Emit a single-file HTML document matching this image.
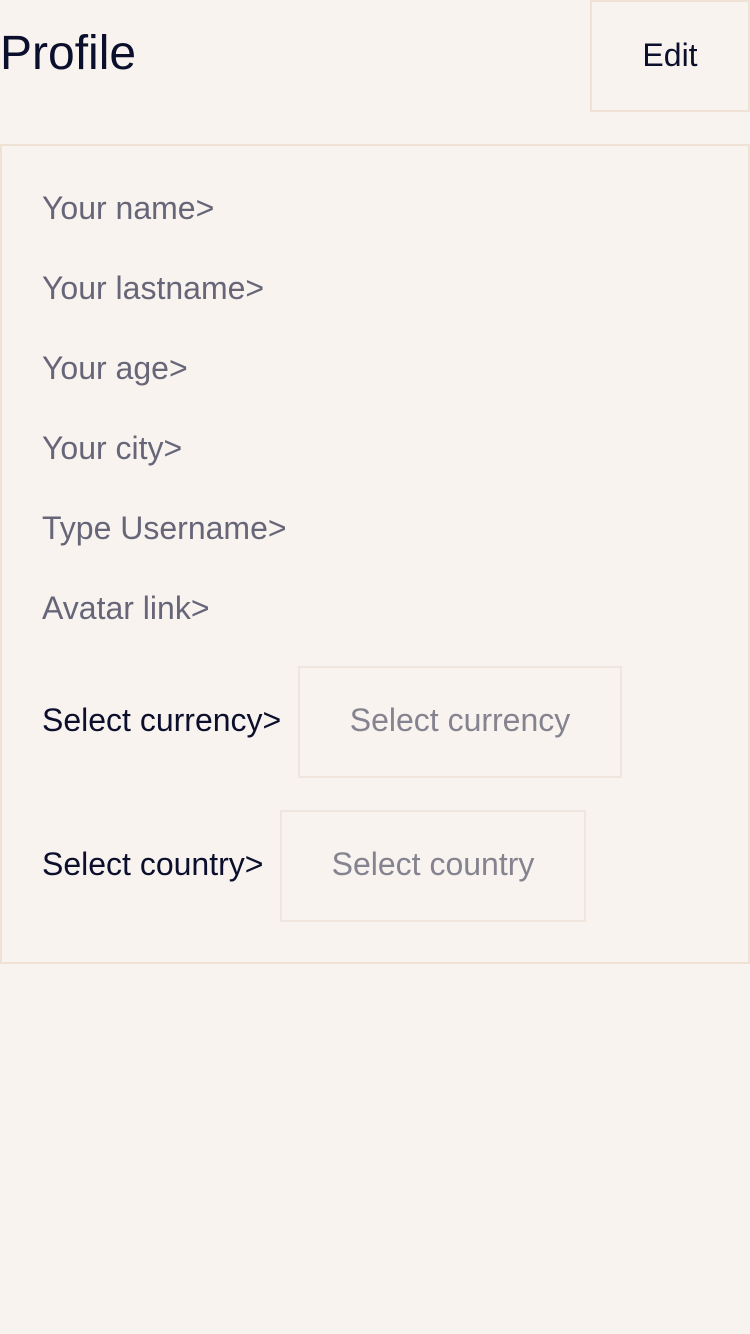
<!DOCTYPE html>
<html><head><style>
body{margin:0;width:750px;height:1334px;background:#f8f3ef;font-family:"Liberation Sans",sans-serif;position:relative;overflow:hidden}
.a{position:absolute;white-space:nowrap}
.t{font-size:48px;color:#0b0f2c;left:0;top:27px;line-height:54px}
.edit{left:590px;top:0;width:156px;height:108px;border:2px solid #efe1d3;font-size:32px;color:#0b0f2c;text-align:center;line-height:106px}
.card{left:0;top:144px;width:746px;height:816px;border:2px solid #efe1d3}
.l{left:42px;font-size:32px;color:#676679;line-height:40px}
.d{color:#0b0f2c}
.box{border:2px solid #f0e6dd;font-size:32px;color:#85838f;text-align:center;line-height:104px;height:108px}
</style></head><body>
<div class="a t">Profile</div>
<div class="a edit">Edit</div>
<div class="a card"></div>
<div class="a l" style="top:188px">Your name&gt;</div>
<div class="a l" style="top:268px">Your lastname&gt;</div>
<div class="a l" style="top:348px">Your age&gt;</div>
<div class="a l" style="top:428px">Your city&gt;</div>
<div class="a l" style="top:508px">Type Username&gt;</div>
<div class="a l" style="top:588px">Avatar link&gt;</div>
<div class="a l d" style="top:700px">Select currency&gt;</div>
<div class="a box" style="left:298px;top:666px;width:320px">Select currency</div>
<div class="a l d" style="top:844px">Select country&gt;</div>
<div class="a box" style="left:280px;top:810px;width:302px">Select country</div>
</body></html>
